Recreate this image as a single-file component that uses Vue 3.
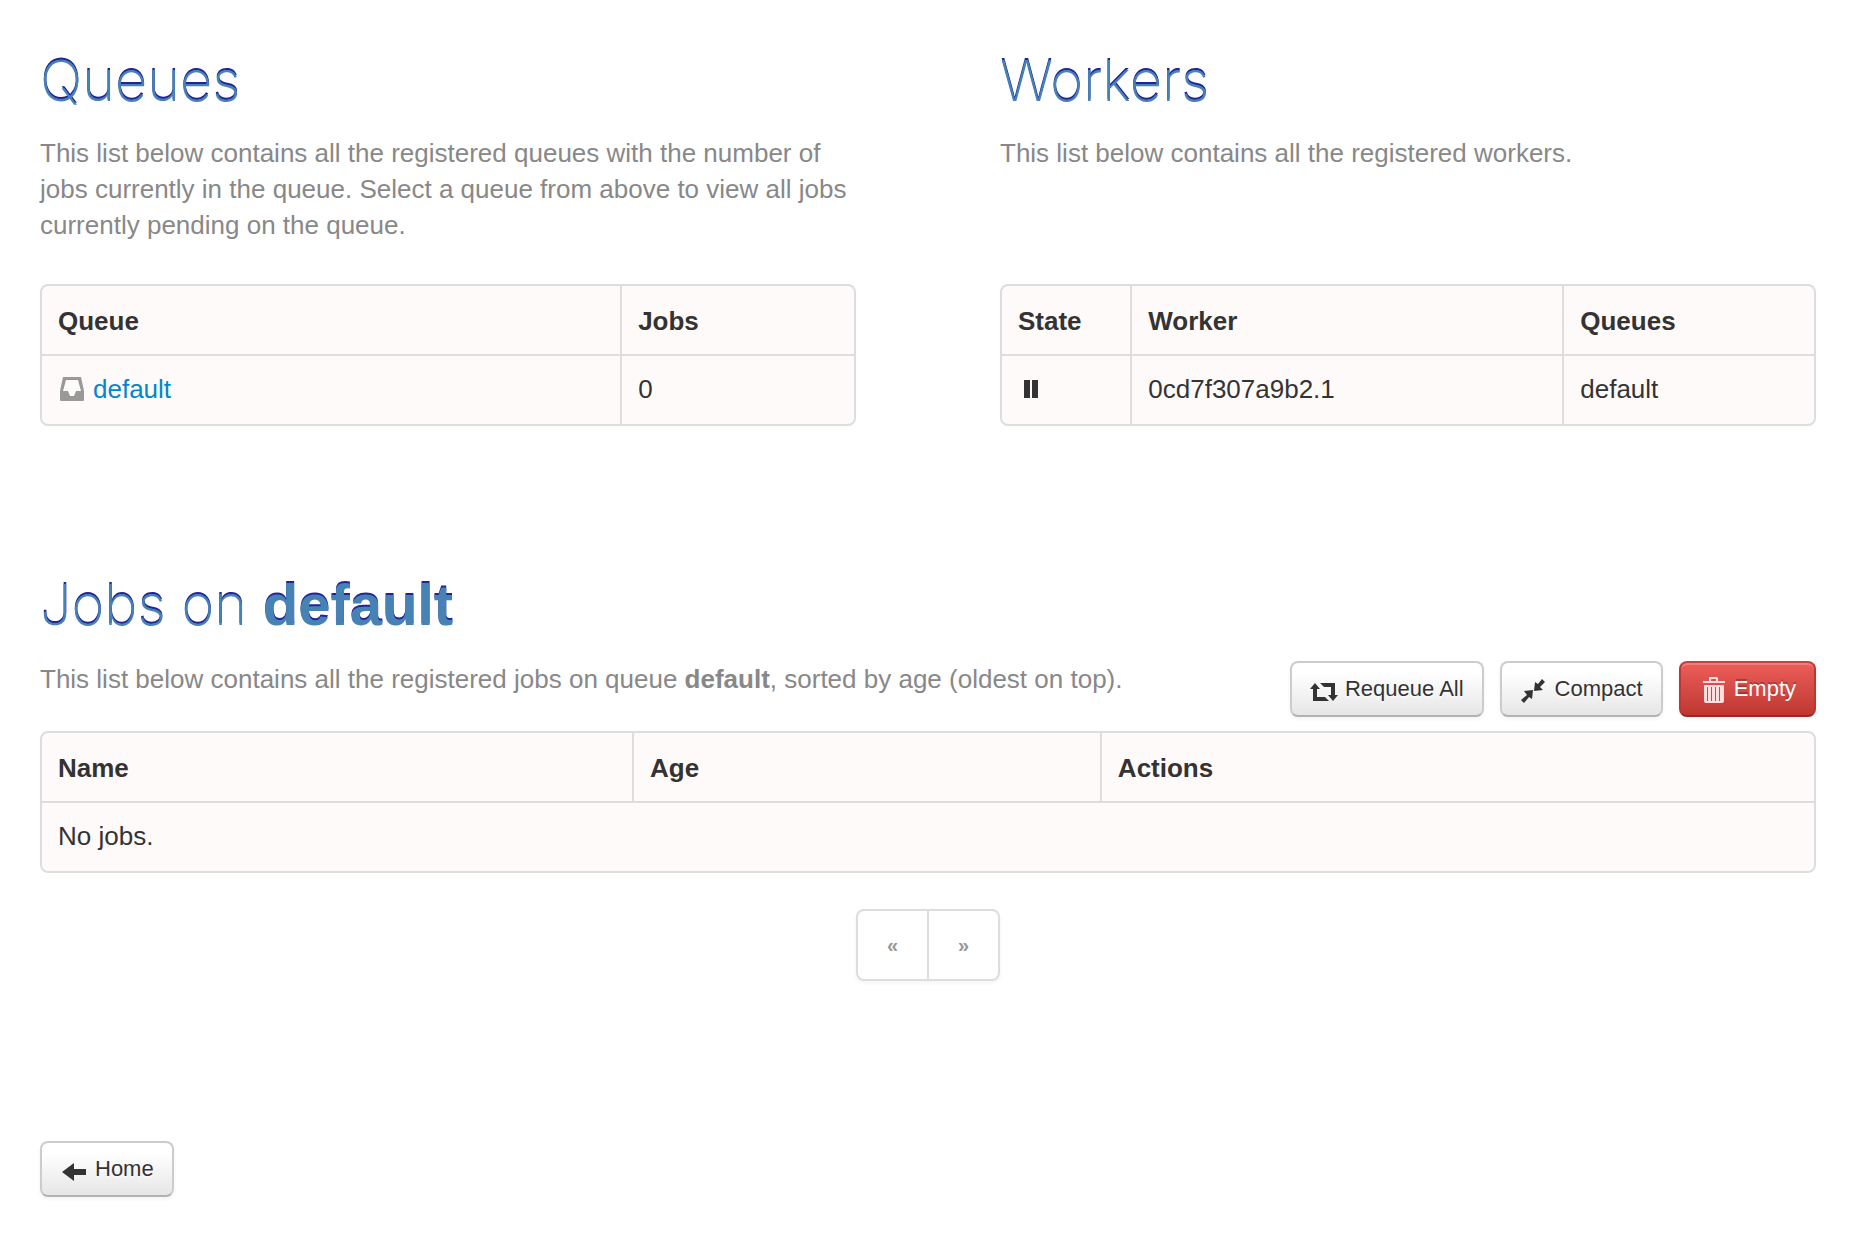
<script setup>
import { ref } from 'vue'

const queues = ref([{ name: 'default', jobs: 0 }])
const workers = ref([{ id: '0cd7f307a9b2.1', queues: 'default' }])
</script>

<template>
  <main class="page">
    <div class="columns">
      <section>
        <h1>Queues</h1>
        <p class="intro overview">
          This list below contains all the registered queues with the number of
          jobs currently in the queue. Select a queue from above to view all jobs
          currently pending on the queue.
        </p>
        <table>
          <colgroup><col class="w-queue" /><col /></colgroup>
          <thead>
            <tr><th scope="col">Queue</th><th scope="col">Jobs</th></tr>
          </thead>
          <tbody>
            <tr v-for="queue in queues" :key="queue.name">
              <td>
                <a class="queue-link" href="#default">
                  <svg class="icon muted" viewBox="0 0 28 28" aria-hidden="true">
                    <path fill-rule="evenodd" d="M5 2h18l3 14v9q0 1-1 1H3q-1 0-1-1v-9zM8 5L5 16h5l2 5h4l2-5h5L20 5z" />
                  </svg>
                  <span>{{ queue.name }}</span>
                </a>
              </td>
              <td>{{ queue.jobs }}</td>
            </tr>
          </tbody>
        </table>
      </section>

      <section>
        <h1>Workers</h1>
        <p class="intro overview">This list below contains all the registered workers.</p>
        <table>
          <colgroup><col class="w-state" /><col class="w-worker" /><col /></colgroup>
          <thead>
            <tr><th scope="col">State</th><th scope="col">Worker</th><th scope="col">Queues</th></tr>
          </thead>
          <tbody>
            <tr v-for="worker in workers" :key="worker.id">
              <td>
                <svg class="icon" viewBox="0 0 28 28" role="img" aria-label="Waiting">
                  <path d="M6 5h6v18H6zM14 5h6v18h-6z" />
                </svg>
              </td>
              <td>{{ worker.id }}</td>
              <td>{{ worker.queues }}</td>
            </tr>
          </tbody>
        </table>
      </section>
    </div>

    <section class="jobs">
      <h1>Jobs on <strong>default</strong></h1>
      <div class="toolbar">
        <p class="intro">
          This list below contains all the registered jobs on queue <strong>default</strong>, sorted by age (oldest on top).
        </p>
        <div class="actions">
          <button type="button" class="btn">
            <svg class="icon" viewBox="0 0 28 28" aria-hidden="true">
              <path d="M5 6l5 6H7v8h8l4 4H3V12H0zM10 6h15v12h3l-5 6-5-6h3v-8h-7z" />
            </svg>
            <span>Requeue All</span>
          </button>
          <button type="button" class="btn">
            <svg class="icon" viewBox="0 0 28 28" aria-hidden="true">
              <path d="M22 2l3 3-5 5 3 3-9 1 1-9 3 2zM4 14l9-1-1 9-3-2-5 6-3-3 6-5z" />
            </svg>
            <span>Compact</span>
          </button>
          <button type="button" class="btn danger">
            <svg class="icon" viewBox="0 0 28 28" aria-hidden="true">
              <path fill-rule="evenodd" d="M10 0h8l1 1v3h7v2H4V4h6zM12 2v2h5V2zM5 8h20v16q0 2-2 2H7q-2 0-2-2zM8 10v14h1V10zM12 10v14h1V10zM16 10v14h1V10zM20 10v14h1V10z" />
            </svg>
            <span>Empty</span>
          </button>
        </div>
      </div>
      <table>
        <colgroup><col class="w-name" /><col class="w-age" /><col /></colgroup>
        <thead>
          <tr><th scope="col">Name</th><th scope="col">Age</th><th scope="col">Actions</th></tr>
        </thead>
        <tbody>
          <tr><td colspan="3">No jobs.</td></tr>
        </tbody>
      </table>
      <nav class="pagination" aria-label="Pages">
        <a href="#prev">«</a>
        <a href="#next">»</a>
      </nav>
    </section>

    <a class="btn" href="#home">
      <svg class="icon" viewBox="0 0 28 28" aria-hidden="true">
        <path d="M2 15l12-9v6h12v6H14v6z" />
      </svg>
      <span>Home</span>
    </a>
  </main>
</template>

<style>
body {
  background: #fff;
}
</style>

<style scoped>
.page {
  padding: 40px 44px 60px 40px;
  color: #333;
  font: 26px/36px "Liberation Sans", Arial, sans-serif;
}

.columns {
  display: grid;
  grid-template-columns: 1fr 1fr;
  gap: 144px;
}

h1 {
  margin: 0 0 13px;
  color: steelblue;
  font: 200 56px/82px Inter, "Liberation Sans", sans-serif;
  text-shadow: 0 -2px 0 #22229c;
}

h1 strong {
  font-family: "Liberation Sans", Arial, sans-serif;
  font-size: 58px;
  font-weight: 700;
  line-height: 1;
}

.intro {
  margin: 0;
  color: #888;
}

.overview {
  min-height: 108px;
  margin-bottom: 41px;
}

table {
  width: 100%;
  table-layout: fixed;
  border: 2px solid #ddd;
  border-radius: 8px;
  border-spacing: 0;
  overflow: hidden;
  background: snow;
}

th,
td {
  padding: 17px 16px 15px;
  text-align: left;
}

th + th,
td + td {
  border-left: 2px solid #ddd;
}

td {
  padding: 15px 16px 17px;
  border-top: 2px solid #ddd;
}

.w-queue {
  width: 71.2%;
}

.w-state {
  width: 15.8%;
}

.w-worker {
  width: 53.2%;
}

.w-name {
  width: 33.3%;
}

.w-age {
  width: 26.4%;
}

.icon {
  display: block;
  flex: none;
  width: 28px;
  height: 28px;
  fill: #333;
}

.muted {
  fill: #999;
}

.queue-link {
  display: flex;
  align-items: center;
  gap: 7px;
  color: #08c;
  text-decoration: none;
}

.jobs {
  margin-top: 138px;
}

.toolbar {
  display: flex;
  justify-content: space-between;
  align-items: flex-start;
  padding: 2px 0 14px;
}

.actions {
  display: flex;
  gap: 16px;
}

.btn {
  display: inline-flex;
  align-items: center;
  gap: 7px;
  box-sizing: border-box;
  height: 56px;
  padding: 0 18px;
  border: 2px solid #ccc;
  border-bottom-color: #b3b3b3;
  border-radius: 8px;
  background: linear-gradient(#fff, #fff 20%, #e6e6e6);
  box-shadow: inset 0 2px 0 rgba(255, 255, 255, 0.2), 0 2px 4px rgba(0, 0, 0, 0.05);
  color: #333;
  font: 22px/36px "Liberation Sans", Arial, sans-serif;
  text-decoration: none;
  text-shadow: 0 2px 2px rgba(255, 255, 255, 0.75);
  cursor: pointer;
}

.btn .icon {
  margin-top: 4px;
}

.danger {
  border-color: #c9423e #bd362f #942a25;
  background: linear-gradient(#ee5f5b, #bd362f) border-box;
  color: #fff;
  text-shadow: 0 -2px 0 rgba(0, 0, 0, 0.25);
}

.danger .icon {
  fill: #fbdedd;
}

.pagination {
  display: flex;
  width: fit-content;
  margin: 36px auto 160px;
  border: 2px solid #ddd;
  border-radius: 8px;
  box-shadow: 0 2px 4px rgba(0, 0, 0, 0.05);
}

.pagination a {
  width: 69px;
  color: #999;
  font-size: 20px;
  font-weight: 700;
  line-height: 68px;
  text-align: center;
  text-decoration: none;
}

.pagination a + a {
  border-left: 2px solid #ddd;
}
</style>
